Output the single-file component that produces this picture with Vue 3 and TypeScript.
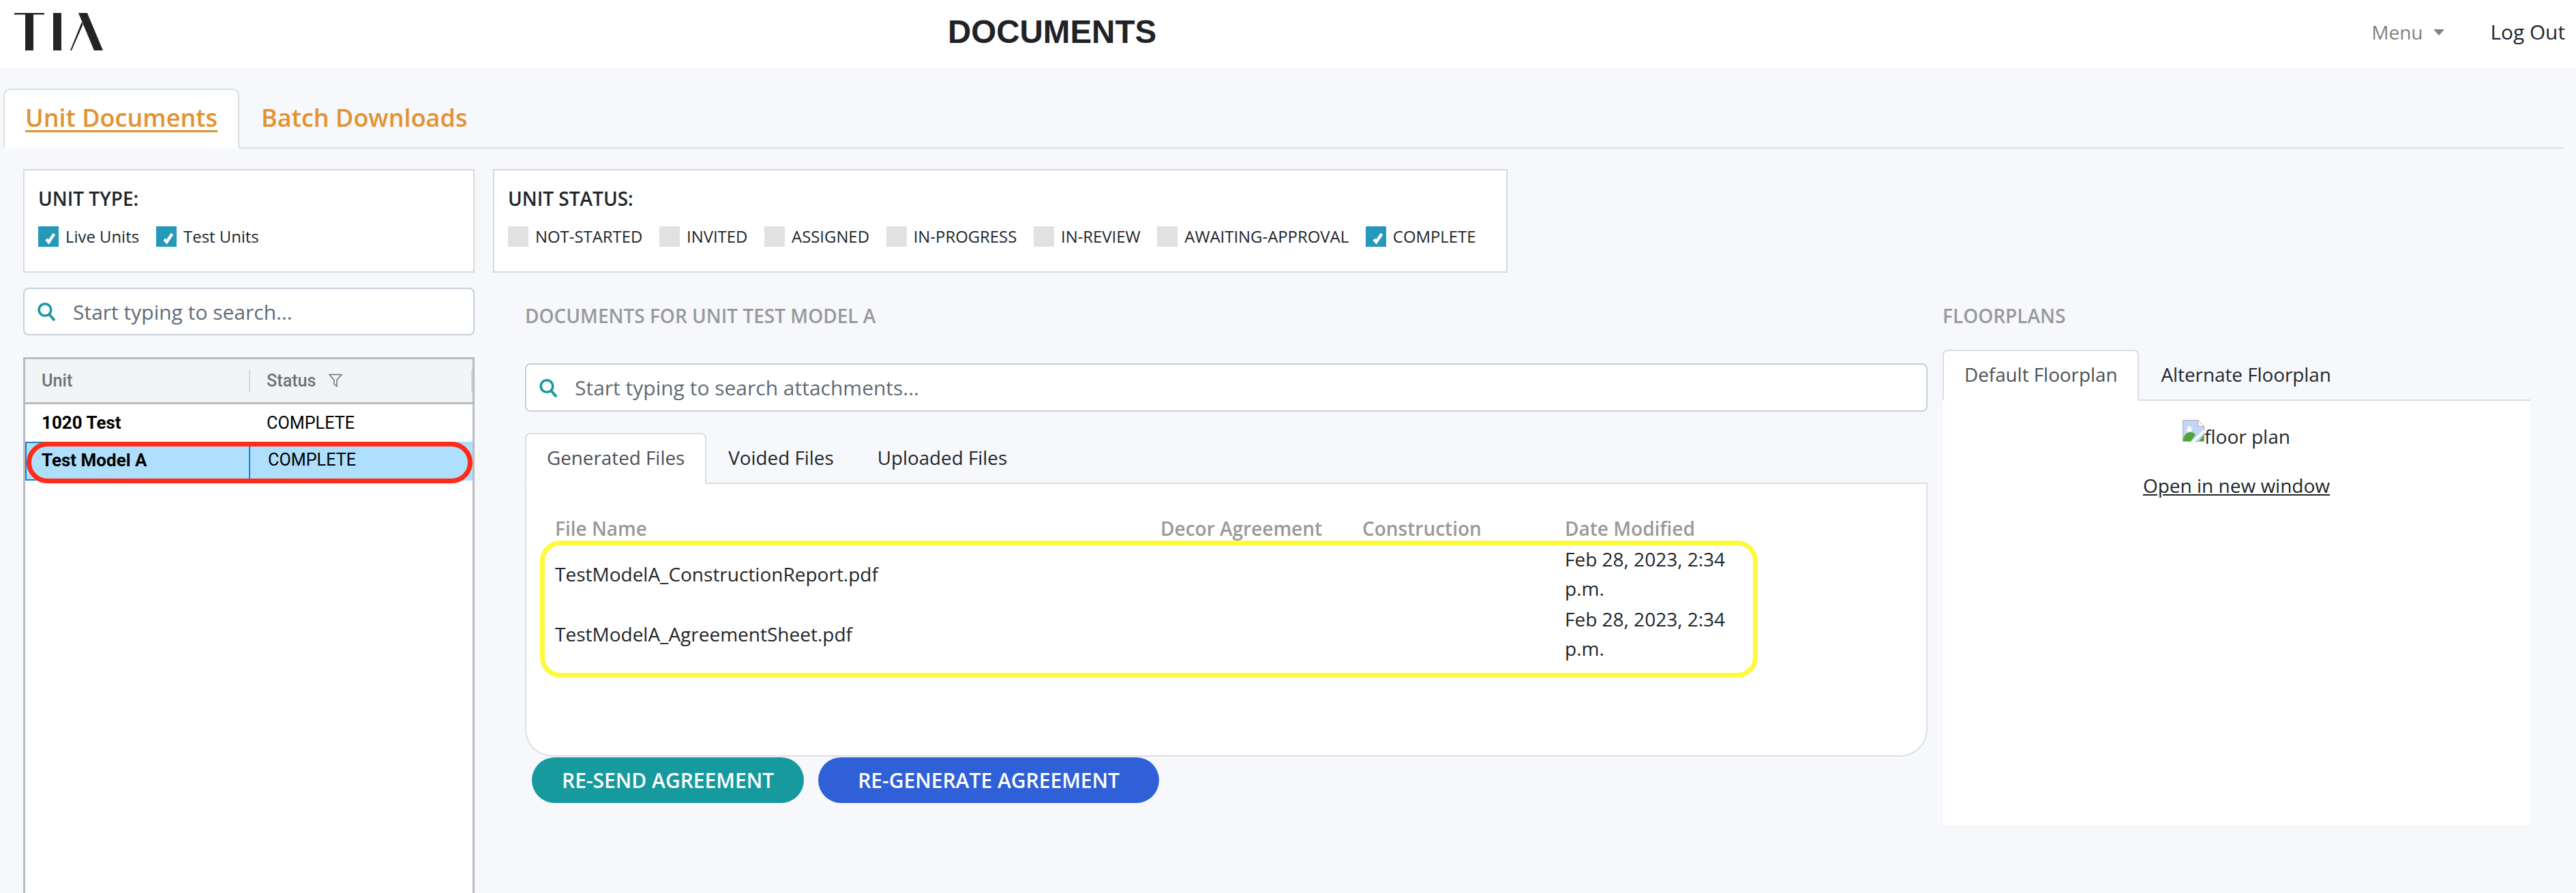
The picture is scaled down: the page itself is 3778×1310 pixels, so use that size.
<script setup lang="ts">
import { ref } from 'vue'

const activeTab = ref('Unit Documents')

const unitTypes = ['Live Units', 'Test Units']

const statuses = [
  { label: 'NOT-STARTED', on: false },
  { label: 'INVITED', on: false },
  { label: 'ASSIGNED', on: false },
  { label: 'IN-PROGRESS', on: false },
  { label: 'IN-REVIEW', on: false },
  { label: 'AWAITING-APPROVAL', on: false },
  { label: 'COMPLETE', on: true },
]

const units = [
  { name: '1020 Test', status: 'COMPLETE', selected: false },
  { name: 'Test Model A', status: 'COMPLETE', selected: true },
]

const files = [
  { name: 'TestModelA_ConstructionReport.pdf', date: 'Feb 28, 2023, 2:34 p.m.' },
  { name: 'TestModelA_AgreementSheet.pdf', date: 'Feb 28, 2023, 2:34 p.m.' },
]
</script>

<template>
  <div class="page">
    <header class="topbar">
      <div class="logo-wrap">
        <svg class="logo" viewBox="0 0 135 56" aria-label="TIA">
          <rect x="0" y="0" width="44" height="2.4" fill="#222426" />
          <rect x="16" y="0" width="12" height="55" fill="#222426" />
          <rect x="57" y="0" width="12" height="55" fill="#222426" />
          <polygon points="94,0 107,0 130,55 117,55" fill="#222426" />
          <polygon points="99,13 100.6,17 84,55 82,55" fill="#222426" />
        </svg>
      </div>
      <div class="page-title">DOCUMENTS</div>
      <nav class="topnav">
        <span class="menu">Menu<i class="caret"></i></span>
        <a class="logout">Log Out</a>
      </nav>
    </header>

    <div class="main-tabs">
      <a class="main-tab" :class="{ active: activeTab === 'Unit Documents' }">Unit Documents</a>
      <a class="main-tab" :class="{ active: activeTab === 'Batch Downloads' }">Batch Downloads</a>
    </div>

    <div class="content">
      <aside class="left-col">
        <section class="filter-box">
          <h4>UNIT TYPE:</h4>
          <div class="checks type-checks">
            <label v-for="t in unitTypes" :key="t" class="check">
              <span class="box on">
                <svg viewBox="0 0 30 30"><path d="M12 19l3.5 4 8-12" fill="none" stroke="#fff" stroke-width="4.4" /></svg>
              </span>
              {{ t }}
            </label>
          </div>
        </section>

        <div class="search unit-search">
          <svg class="search-icon" viewBox="0 0 28 28">
            <circle cx="12" cy="11.5" r="8.8" fill="none" stroke="#169a9e" stroke-width="3.6" />
            <path d="M18 18l8 9" stroke="#169a9e" stroke-width="4" fill="none" />
          </svg>
          <span class="placeholder">Start typing to search...</span>
        </div>

        <div class="grid-box">
          <div class="grid-head">
            <div class="cell">Unit</div>
            <div class="cell status-col">
              Status
              <svg class="funnel" viewBox="0 0 20 20">
                <path d="M1 1.5h18l-7 8v9l-4-3v-6z" fill="none" stroke="#6b7177" stroke-width="1.5" />
              </svg>
            </div>
          </div>
          <div v-for="u in units" :key="u.name" class="grid-row" :class="{ selected: u.selected }">
            <div class="cell name">{{ u.name }}</div>
            <div class="cell status-col">{{ u.status }}</div>
            <span v-if="u.selected" class="red-mark"></span>
          </div>
        </div>
      </aside>

      <div class="right-col">
        <section class="filter-box status-box">
          <h4>UNIT STATUS:</h4>
          <div class="checks status-checks">
            <label v-for="s in statuses" :key="s.label" class="check">
              <span class="box" :class="{ on: s.on }">
                <svg v-if="s.on" viewBox="0 0 30 30"><path d="M12 19l3.5 4 8-12" fill="none" stroke="#fff" stroke-width="4.4" /></svg>
              </span>
              {{ s.label }}
            </label>
          </div>
        </section>

        <div class="panels">
          <section class="docs">
            <h5 class="section-title">DOCUMENTS FOR UNIT TEST MODEL A</h5>
            <div class="search doc-search">
              <svg class="search-icon" viewBox="0 0 28 28">
                <circle cx="12" cy="11.5" r="8.8" fill="none" stroke="#169a9e" stroke-width="3.6" />
                <path d="M18 18l8 9" stroke="#169a9e" stroke-width="4" fill="none" />
              </svg>
              <span class="placeholder">Start typing to search attachments...</span>
            </div>

            <div class="tabs">
              <a class="tab active">Generated Files</a>
              <a class="tab">Voided Files</a>
              <a class="tab">Uploaded Files</a>
            </div>
            <div class="file-card">
              <div class="file-row file-head">
                <div>File Name</div>
                <div>Decor Agreement</div>
                <div>Construction</div>
                <div>Date Modified</div>
              </div>
              <div class="file-rows">
                <span class="yellow-mark"></span>
                <div v-for="f in files" :key="f.name" class="file-row">
                  <div>{{ f.name }}</div>
                  <div></div>
                  <div></div>
                  <div>{{ f.date }}</div>
                </div>
              </div>
            </div>
            <div class="actions">
              <button class="btn teal">RE-SEND AGREEMENT</button>
              <button class="btn blue">RE-GENERATE AGREEMENT</button>
            </div>
          </section>

          <section class="floorplans">
            <h5 class="section-title">FLOORPLANS</h5>
            <div class="tabs fp-tabs">
              <a class="tab active">Default Floorplan</a>
              <a class="tab">Alternate Floorplan</a>
            </div>
            <div class="fp-panel">
              <div class="broken-img">
                <svg viewBox="0 0 32 32" class="broken-icon">
                  <path d="M.5.5h22l9 9v22H.5z" fill="#c3d6f5" stroke="#a9a9a9" />
                  <path d="M22.5.5v9h9z" fill="#fff" stroke="#a9a9a9" />
                  <path d="M6 17q0-2 2-7q2-2 4 0q2 5 1 7z" fill="#fff" />
                  <path d="M1 31v-4q3-9 11-9q4 0 7 4l-7 9z" fill="#4fa43a" />
                  <path d="M31 22v9h-7z" fill="#4fa43a" />
                  <path d="M31 14L13 32h5l14-14z" fill="#fff" />
                </svg>
                <span>floor plan</span>
              </div>
              <a class="open-link">Open in new window</a>
            </div>
          </section>
        </div>
      </div>
    </div>
  </div>
</template>

<style>
html,
body {
  margin: 0;
  background: #f6f8fc;
}
</style>

<style scoped>
.page {
  height: 100vh;
  overflow: hidden;
  background: #f6f8fc;
  color: #212529;
  font-family: "Open Sans", sans-serif;
  font-size: 28px;
  line-height: 1.5;
}

/* top bar */
.topbar {
  height: 100px;
  background: #fff;
  display: flex;
  align-items: flex-start;
}
.logo-wrap {
  width: 1390px;
  box-sizing: border-box;
  padding: 19px 0 0 21px;
}
.logo {
  display: block;
  width: 135px;
  height: 56px;
}
.page-title {
  font-family: "Liberation Sans", Arial, sans-serif;
  font-weight: 700;
  font-size: 47.5px;
  line-height: 1;
  padding-top: 23px;
  color: #1f2327;
}
.topnav {
  margin-left: auto;
  display: flex;
  align-items: center;
  height: 94px;
  padding-right: 16px;
  gap: 68px;
}
.menu {
  color: #808080;
  font-size: 28px;
  display: flex;
  align-items: center;
}
.caret {
  margin-left: 15px;
  width: 0;
  height: 0;
  border: 8px solid transparent;
  border-top: 9px solid #808080;
  border-bottom: 0;
}
.logout {
  font-size: 29.8px;
}

/* main tabs */
.main-tabs {
  display: flex;
  margin: 30px 18px 0 5px;
  height: 88px;
  box-sizing: border-box;
  border-bottom: 2px solid #d8dfe2;
}
.main-tab {
  box-sizing: border-box;
  height: 88px;
  padding: 14px 30px 0;
  font-size: 36px;
  font-weight: 600;
  color: #e39230;
  border: 2px solid transparent;
  border-radius: 10px 10px 0 0;
}
.main-tab.active {
  background: #fff;
  border-color: #d8dfe2 #d8dfe2 #fff;
  text-decoration: underline;
  text-underline-offset: 5px;
}

/* layout */
.content {
  display: flex;
  padding: 30px 0 0 34px;
}
.left-col {
  width: 662px;
  flex: none;
  margin-right: 27px;
}
.right-col {
  flex: 1;
  min-width: 0;
}

/* filters */
.filter-box {
  box-sizing: border-box;
  height: 152px;
  background: #fff;
  border: 2px solid #d7dadc;
  padding: 20px 20px 0;
}
.filter-box h4 {
  margin: 0;
  font-size: 28px;
  font-weight: 600;
  line-height: 42px;
}
.checks {
  display: flex;
  margin-top: 20px;
  font-size: 23.9px;
  line-height: 30px;
}
.type-checks {
  gap: 25px;
}
.status-checks {
  gap: 24.7px;
}
.check {
  display: flex;
  align-items: center;
  gap: 10px;
  white-space: nowrap;
}
.box {
  width: 30px;
  height: 30px;
  background: #e1e1e1;
  flex: none;
}
.box.on {
  background: #2499b9;
}
.box svg {
  display: block;
}
.status-box {
  width: 1488px;
}

/* search inputs */
.search {
  box-sizing: border-box;
  height: 71px;
  margin-top: 22px;
  background: #fff;
  border: 2px solid #c6d0d9;
  border-radius: 8px;
  display: flex;
  align-items: center;
  padding-left: 18px;
}
.unit-search {
  height: 70px;
}
.search-icon {
  width: 28px;
  height: 28px;
  flex: none;
  margin-right: 25px;
}
.placeholder {
  color: #5f6b76;
  font-size: 30px;
}

/* unit grid */
.grid-box {
  margin-top: 32px;
  height: 800px;
  background: #fff;
  border: 3px solid #b7bcc0;
  border-bottom: 0;
  font-family: Roboto, sans-serif;
  font-size: 25.2px;
}
.grid-head {
  display: grid;
  grid-template-columns: 328px 1fr;
  height: 63px;
  background: #f1f5f5;
  border-bottom: 3px solid #b7bcc0;
  align-items: center;
  color: #6d7277;
  font-weight: 500;
}
.grid-head .cell {
  line-height: 33px;
}
.grid-head .status-col {
  border-left: 2px solid #d5d9da;
  border-right: 2px solid #d5d9da;
}
.cell {
  padding-left: 24px;
}
.funnel {
  width: 20px;
  height: 20px;
  margin-left: 12px;
  vertical-align: -1px;
}
.grid-row {
  position: relative;
  display: grid;
  grid-template-columns: 328px 1fr;
  height: 55px;
  align-items: center;
  color: #000;
}
.grid-row .status-col {
  padding-left: 26px;
}
.grid-row .name {
  font-weight: 700;
  font-size: 26px;
}
.grid-row.selected {
  background: #aedffd;
  height: 57px;
}
.grid-row.selected .name {
  align-self: stretch;
  line-height: 54px;
  box-shadow: inset 2px 0 0 #1a80d0, inset 0 2px 0 #1a80d0, inset 0 -2px 0 #1a80d0;
}
.grid-row.selected .status-col {
  align-self: stretch;
  line-height: 54px;
  border-left: 2px solid #1a80d0;
}
.red-mark {
  position: absolute;
  left: 2px;
  right: 0;
  top: 0;
  bottom: -4px;
  border: 7px solid #ff2a1a;
  border-radius: 32px;
}

/* right side panels */
.panels {
  display: flex;
  padding-left: 47px;
}
.docs {
  width: 2057px;
  flex: none;
  margin-right: 22px;
}
.floorplans {
  width: 862px;
  flex: none;
}
.section-title {
  margin: 0;
  padding-top: 43px;
  font-size: 28px;
  line-height: 40px;
  font-weight: 600;
  color: #999;
}
.doc-search {
  margin-top: 50px;
  padding-left: 18px;
}

/* inner tabs */
.tabs {
  display: flex;
  margin-top: 31px;
  height: 75px;
  box-sizing: border-box;
  border-bottom: 2px solid #d8dfe2;
  font-size: 27.8px;
}
.tab {
  box-sizing: border-box;
  height: 75px;
  padding: 14px 30px 0;
  border: 2px solid transparent;
  border-radius: 8px 8px 0 0;
}
.tab.active {
  background: #fff;
  color: #495057;
  border-color: #d8dfe2 #d8dfe2 #fff;
}
.fp-tabs {
  margin-top: 30px;
}
.file-card {
  box-sizing: border-box;
  height: 400px;
  background: #fff;
  border: 2px solid #dcdfe3;
  border-top: 0;
  border-radius: 0 0 40px 40px;
  padding: 43px 0 0 42px;
}
.file-row {
  display: grid;
  grid-template-columns: 888px 296px 297px 272px;
  height: 88px;
  align-items: center;
  line-height: 43px;
}
.file-head {
  height: 45px;
  color: #999;
  font-weight: 600;
  font-size: 28px;
}
.file-rows {
  position: relative;
}
.yellow-mark {
  position: absolute;
  left: -22px;
  top: -5px;
  width: 1786px;
  height: 201px;
  box-sizing: border-box;
  border: 7px solid #fff93b;
  border-radius: 30px;
  pointer-events: none;
}
.actions {
  display: flex;
  gap: 21px;
  padding-left: 10px;
  margin-top: 1px;
}
.btn {
  height: 67px;
  border: 0;
  border-radius: 34px;
  padding: 0 44px;
  color: #fff;
  font-family: "Open Sans", sans-serif;
  font-size: 30px;
  font-weight: 600;
}
.teal {
  background: #169a9e;
}
.blue {
  background: #3060d8;
  padding: 0 58px;
}

/* floorplan */
.fp-panel {
  height: 622px;
  background: #fff;
  text-align: center;
  padding-top: 28px;
  box-sizing: border-box;
}
.broken-img {
  display: flex;
  justify-content: center;
  align-items: flex-end;
  height: 40px;
  line-height: 32px;
}
.broken-icon {
  width: 32px;
  height: 32px;
  margin-bottom: 8px;
}
.open-link {
  display: block;
  margin-top: 35px;
  text-decoration: underline;
}
</style>
